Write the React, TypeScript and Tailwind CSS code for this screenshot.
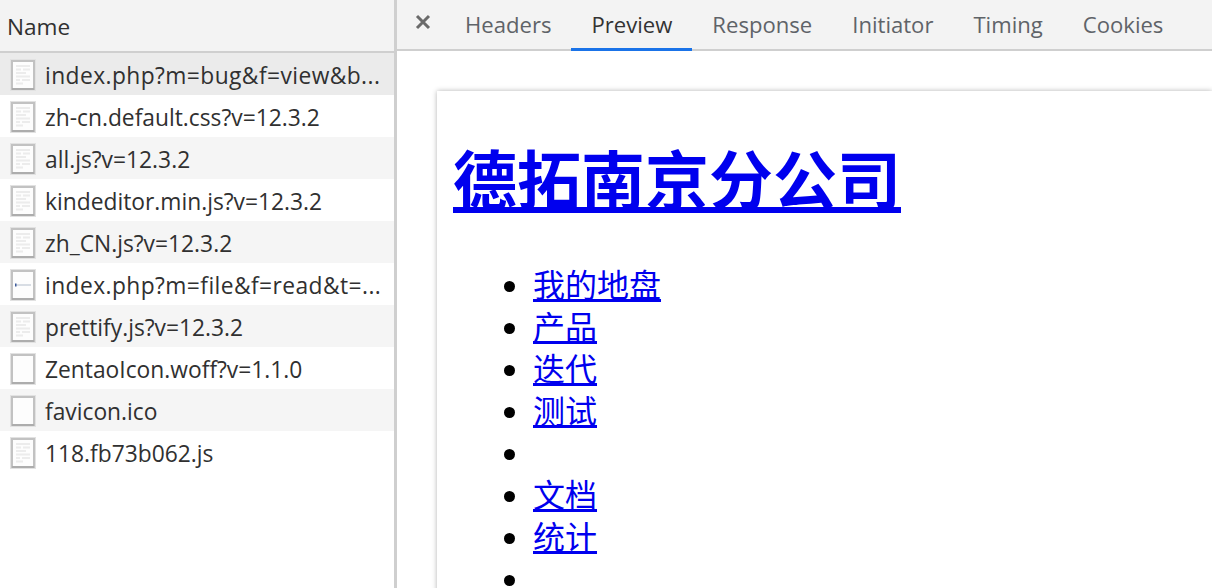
import React from 'react';

type Kind = 'script' | 'blank' | 'image';

const requests: { name: string; kind: Kind; wide?: boolean }[] = [
  { name: 'index.php?m=bug&f=view&b...', kind: 'script', wide: true },
  { name: 'zh-cn.default.css?v=12.3.2', kind: 'script' },
  { name: 'all.js?v=12.3.2', kind: 'script' },
  { name: 'kindeditor.min.js?v=12.3.2', kind: 'script' },
  { name: 'zh_CN.js?v=12.3.2', kind: 'script' },
  { name: 'index.php?m=file&f=read&t=...', kind: 'image', wide: true },
  { name: 'prettify.js?v=12.3.2', kind: 'script' },
  { name: 'ZentaoIcon.woff?v=1.1.0', kind: 'blank' },
  { name: 'favicon.ico', kind: 'blank' },
  { name: '118.fb73b062.js', kind: 'script' },
];

const tabs = ['Headers', 'Preview', 'Response', 'Initiator', 'Timing', 'Cookies'];

const menu = ['我的地盘', '产品', '迭代', '测试', '', '文档', '统计', ''];

function FileIcon({ kind }: { kind: Kind }) {
  return (
    <svg width="26" height="32" viewBox="0 0 26 32" className="mt-0.5 shrink-0">
      <rect x="0.500" y="0.500" width="25" height="31" fill="none" stroke="#e2e2e2" />
      <rect x="2" y="2" width="22" height="28" fill="#fdfdfd" stroke="#c2c2c2" strokeWidth="2" />
      <path d="M2 30h22" stroke="#adadad" strokeWidth="2" />
      {kind === 'script' && (
        <path
          d="M6 7h14M6 10.500h5M13 10.500h7M6 14h10M6 17.500h14M6 21h4M12 21h8M6 24.500h7"
          stroke="#ececec"
          strokeWidth="2"
        />
      )}
      {kind === 'image' && (
        <>
          <path d="M5 16h16" stroke="#d8dde4" strokeWidth="2" />
          <path d="M5 16h1.500" stroke="#3c5a9a" strokeWidth="3" />
        </>
      )}
    </svg>
  );
}

export default function App() {
  return (
    <div className="flex h-[588px] w-[1212px] overflow-hidden bg-white font-['Open_Sans','Noto_Sans_CJK_SC',sans-serif] text-[#303030]">
      {/* Lista de requests */}
      <div className="w-[397px] shrink-0 border-r-[3px] border-[#cfcfcf]">
        <div className="flex h-[53px] items-center border-b-2 border-[#cfcfcf] bg-[#f3f3f3] pl-[7px] pt-0.5 text-[22.6px]">
          Name
        </div>
        {requests.map((r, i) => (
          <div
            key={r.name}
            className={`flex h-[42px] items-center gap-[9px] pl-[10px] text-[22.8px] whitespace-nowrap ${
              i === 0 ? 'bg-[#ebebeb]' : i % 2 === 0 ? 'bg-[#f5f5f5]' : 'bg-white'
            }`}
          >
            <FileIcon kind={r.kind} />
            <span className={`pt-1 ${r.wide ? 'tracking-[0.42px]' : ''}`}>{r.name}</span>
          </div>
        ))}
      </div>

      {/* Painel de preview */}
      <div className="flex min-w-0 flex-1 flex-col">
        <div className="flex h-[51px] shrink-0 items-stretch border-b-2 border-[#cfcfcf] bg-[#f3f3f3]">
          <svg width="16" height="16" viewBox="0 0 16 16" className="ml-[18px] mr-[14px] mt-[14px]">
            <path d="M2 2l12 12M14 2L2 14" stroke="#6a6a6a" strokeWidth="3" />
          </svg>
          {tabs.map((t) => (
            <div
              key={t}
              className={`-mb-0.5 flex items-center border-b-[3px] px-5 pt-0.5 text-[22.1px] ${
                t === 'Preview' ? 'border-[#1a73e8] text-[#333333]' : 'border-transparent text-[#5f6368]'
              }`}
            >
              {t}
            </div>
          ))}
        </div>
        <div className="min-h-0 flex-1 overflow-hidden pl-10 pt-10">
          <div className="h-[600px] bg-white pl-4 pt-[42px] text-black shadow-[0_0_5px_rgba(0,0,0,0.3)]">
            <h1 className="text-[64px] leading-[94px] font-bold">
              <a className="text-[#0000ee] underline decoration-[6px]" href="#">
                德拓南京分公司
              </a>
            </h1>
            <ul className="mt-[37px] list-disc pl-20 text-[32px] leading-[42px]">
              {menu.map((m, i) => (
                <li key={i} className="h-[42px]">
                  {m && (
                    <a className="text-[#0000ee] underline" href="#">
                      {m}
                    </a>
                  )}
                </li>
              ))}
            </ul>
          </div>
        </div>
      </div>
    </div>
  );
}
